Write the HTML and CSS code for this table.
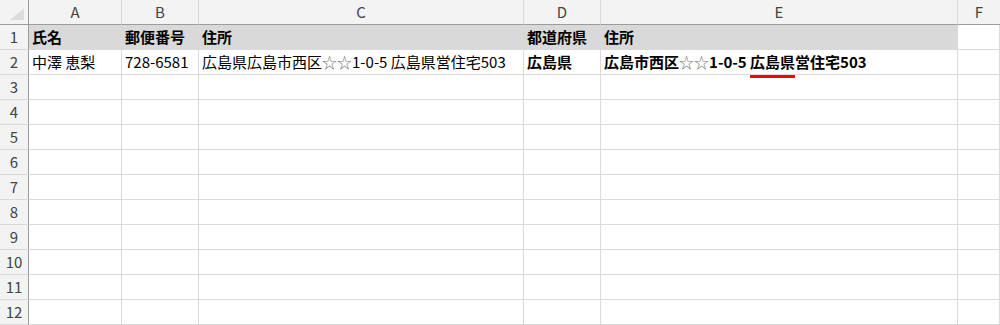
FILE: index.html
```html
<!DOCTYPE html>
<html lang="ja">
<head>
  <meta charset="UTF-8" />
  <title>Sheet1</title>
  <link rel="stylesheet" href="styles.css">
</head>
<body>

  <div class="sheet">
    <!-- column headers -->
    <div class="corner">
      <svg width="29" height="25" viewBox="0 0 29 25"><polygon points="25,9 25,21 11,21" fill="#dcdcdc"/></svg>
    </div>
    <div class="col-head">A</div>
    <div class="col-head">B</div>
    <div class="col-head">C</div>
    <div class="col-head">D</div>
    <div class="col-head">E</div>
    <div class="col-head col-f">F</div>

    <!-- row 1 -->
    <div class="row-head">1</div>
    <div class="cell head-fill bold">氏名</div>
    <div class="cell head-fill bold">郵便番号</div>
    <div class="cell head-fill bold">住所</div>
    <div class="cell head-fill bold">都道府県</div>
    <div class="cell head-fill bold">住所</div>
    <div class="cell"></div>

    <!-- row 2 -->
    <div class="row-head">2</div>
    <div class="cell">中澤 恵梨</div>
    <div class="cell">728-6581</div>
    <div class="cell">広島県広島市西区<span class="star">☆☆</span>1-0-5 広島県営住宅503</div>
    <div class="cell bold">広島県</div>
    <div class="cell bold">広島市西区<span class="star">☆☆</span>1-0-5 <span class="mark">広島県</span>営住宅503</div>
    <div class="cell"></div>
  </div>

  <script>
    // empty rows 3..12
    const sheet = document.querySelector('.sheet');
    for (let r = 3; r <= 12; r++) {
      const head = document.createElement('div');
      head.className = 'row-head';
      head.textContent = r;
      sheet.appendChild(head);
      for (let c = 0; c < 6; c++) {
        const cell = document.createElement('div');
        cell.className = 'cell';
        sheet.appendChild(cell);
      }
    }
  </script>

</body>
</html>
```

FILE: styles.css
```css
body {
  margin: 0;
  background: #fff;
  font-family: 'Noto Sans CJK JP', 'Noto Sans', sans-serif;
  color: #000;
  overflow: hidden;
}

.sheet {
  display: grid;
  grid-template-columns: 29px 93px 77px 325px 77px 357px 1fr;
  grid-template-rows: 25px;
  grid-auto-rows: 25px;
  width: 1000px;
}

.corner {
  background: #f3f3f3;
  border-right: 1px solid #9c9c9c;
  border-bottom: 1px solid #9c9c9c;
  box-sizing: border-box;
}

.corner svg {
  display: block;
  margin: -1px 0 0 -1px;
}

.col-head {
  background: #f3f3f3;
  color: #444;
  font-size: 15px;
  text-align: center;
  line-height: 24px;
  border-right: 1px solid #dadada;
  border-bottom: 1px solid #9c9c9c;
  box-sizing: border-box;
}

.col-f {
  border-right: none;
}

.row-head {
  background: #f3f3f3;
  color: #444;
  font-size: 15px;
  text-align: center;
  line-height: 24px;
  border-right: 1px solid #9c9c9c;
  border-bottom: 1px solid #dadada;
  box-sizing: border-box;
}

.cell {
  font-size: 15px;
  line-height: 24px;
  padding-left: 3px;
  white-space: nowrap;
  border-right: 1px solid #dadada;
  border-bottom: 1px solid #dadada;
  box-sizing: border-box;
}

.head-fill {
  background: #d9d9d9;
}

.bold {
  font-weight: bold;
}

.star {
  color: #777;
  font-weight: normal;
}

.mark {
  position: relative;
}

.mark::after {
  content: '';
  position: absolute;
  left: 0;
  right: 0;
  top: 24px;
  height: 3px;
  background: #f00;
}
```
